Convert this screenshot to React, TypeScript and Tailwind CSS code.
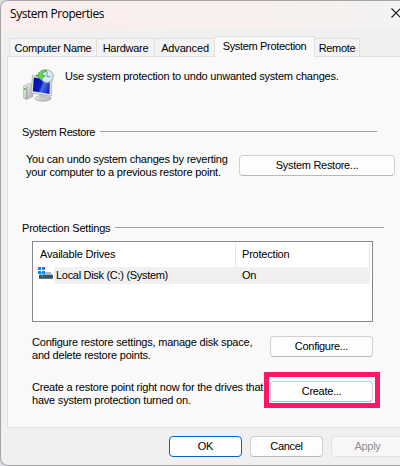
import type { ReactNode } from 'react';
import { clsx } from 'clsx';

const tabs = [
  { label: 'Computer Name', width: 'w-[87px]', tracking: 'tracking-[-0.3px]' },
  { label: 'Hardware', width: 'w-[58px]', tracking: 'tracking-[-0.25px]' },
  { label: 'Advanced', width: 'w-[61px]', tracking: 'tracking-[-0.15px]' },
  { label: 'System Protection', width: 'w-[101px]', tracking: 'tracking-[-0.33px]', active: true },
  { label: 'Remote', width: 'w-[45px]', tracking: 'tracking-[-0.3px]' },
];

const drives = [{ name: 'Local Disk (C:) (System)', protection: 'On' }];

interface ButtonProps {
  children: ReactNode;
  className?: string;
  variant?: 'default' | 'primary' | 'disabled';
}

function Button({ children, className, variant = 'default' }: ButtonProps) {
  return (
    <button
      type="button"
      disabled={variant === 'disabled'}
      className={clsx(
        'flex h-[21px] shrink-0 items-center justify-center rounded-[4px] border whitespace-nowrap tracking-[-0.3px]',
        variant === 'default' && 'border-[#d0d0d0] border-b-[#b9b9b9] bg-[#fdfdfd]',
        variant === 'primary' && 'border-[#0067c0] bg-[#fdfdfd]',
        variant === 'disabled' && 'border-[#e3e3e3] bg-[#f7f7f7] text-[#8f8f8f]',
        className,
      )}
    >
      {children}
    </button>
  );
}

function SectionTitle({ children, className }: { children: ReactNode; className?: string }) {
  return (
    <div className={clsx('flex h-[13px] items-center', className)}>
      <h2 className="shrink-0 whitespace-nowrap">{children}</h2>
      <div className="mb-[2px] h-px flex-1 bg-[#a0a0a0]" />
    </div>
  );
}

function RestoreIcon() {
  return (
    <svg width="32" height="33" viewBox="0 0 32 33" className="shrink-0">
      <defs>
        <linearGradient id="screen" x1="0" y1="0.2" x2="1" y2="0.6">
          <stop offset="0" stopColor="#06109a" />
          <stop offset="0.5" stopColor="#0a1cc0" />
          <stop offset="0.62" stopColor="#4470e4" />
          <stop offset="1" stopColor="#1228c8" />
        </linearGradient>
        <linearGradient id="metal" x1="0" y1="0" x2="1" y2="1">
          <stop offset="0" stopColor="#f2f2f2" />
          <stop offset="1" stopColor="#a8aaac" />
        </linearGradient>
      </defs>
      <path d="M0.5 17 L6 14.5 L10 15.5 V27.5 L3.5 30.5 L0.5 29 Z" fill="url(#metal)" stroke="#a6a6a6" strokeWidth="0.6" />
      <path d="M3.8 17.5 V30" stroke="#8a8a8a" strokeWidth="0.8" />
      <rect x="1" y="19" width="1.8" height="2" fill="#55c83c" />
      <ellipse cx="20" cy="29.3" rx="8.2" ry="2.9" fill="url(#metal)" stroke="#a4a4a4" strokeWidth="0.6" />
      <path d="M17 25 H23 L24 29 H16 Z" fill="#c0c2c4" />
      <path d="M9.5 6.5 L29 9.5 L28.3 27 L8 24 Z" fill="#e2e4e6" stroke="#a0a4a8" strokeWidth="0.7" />
      <path d="M10.8 8.4 L27 11 L26.5 25 L9.8 22.3 Z" fill="url(#screen)" />
      <circle cx="24" cy="7.2" r="6.2" fill="#dcebf5" stroke="#a9bac4" strokeWidth="1.2" />
      <path d="M24 3 V7.6 H27.5" fill="none" stroke="#7793ae" strokeWidth="1" />
      <path d="M23.5 1 C18.5 0.4 15.5 3 15.6 6 H13 L18 11 L22 6.5 H19.3 C19.3 4 21 2.5 23.5 2.5 Z" fill="#6bd354" stroke="#2f9b2b" strokeWidth="0.7" />
    </svg>
  );
}

function DriveIcon() {
  return (
    <svg width="15" height="13" viewBox="0 0 15 13" className="shrink-0">
      <path d="M3 5 H12.5 L14.5 8 H1 Z" fill="#a9b8c4" />
      <rect x="1" y="8" width="14" height="4" fill="#38536a" />
      <rect x="1" y="11" width="14" height="1" fill="#64798a" />
      <rect x="4" y="9" width="1" height="1" fill="#52e070" />
      <g fill="#0c8bdc">
        <rect x="0" y="0" width="3" height="3" />
        <rect x="4" y="0" width="3" height="3" />
        <rect x="0" y="4" width="3" height="3" />
        <rect x="4" y="4" width="3" height="3" />
      </g>
    </svg>
  );
}

export default function App() {
  return (
    <div className="h-[466px] w-[400px] overflow-hidden bg-[#dcdce4] font-['Liberation_Sans',sans-serif] text-[11px] leading-[13px] tracking-[-0.21px] text-black">
      <div className="flex h-[466px] w-[420px] flex-col rounded-l-[8px] border border-r-0 border-[#a5a5a5] bg-[#f0f0f0]">
        <header className="flex h-[28px] w-[399px] shrink-0 items-start justify-between rounded-tl-[7px] bg-linear-to-r from-[#faeeee] via-[#f9efee] to-[#f3f3f1]">
          <h1 className="pt-[5px] pl-[9px] font-['Open_Sans',sans-serif] text-[12px] leading-[16px] tracking-[-0.45px] whitespace-nowrap">
            System Properties
          </h1>
          <svg width="9" height="10" viewBox="0 0 9 10" className="mt-[7px] shrink-0">
            <path d="M0.5 0.5 L9.5 9.5 M9.5 0.5 L0.5 9.5" stroke="#1a1a1a" strokeWidth="1.1" />
          </svg>
        </header>

        <nav className="relative z-10 mt-[7px] flex h-[21px] items-end pl-[8px]">
          {tabs.map((tab) => (
            <div
              key={tab.label}
              className={clsx(
                'flex shrink-0 justify-center border-t border-l border-[#e0e0e0] whitespace-nowrap last:border-r last:border-l-0',
                tab.active
                  ? '-ml-px h-[21px] border-r bg-[#f9f9f9] pt-[3px]'
                  : 'mb-px h-[18px] bg-[#f3f3f3] pt-[3px]',
                tab.width,
                tab.tracking,
              )}
            >
              {tab.label}
            </div>
          ))}
        </nav>

        <main className="-mt-px ml-[6px] h-[372px] shrink-0 border border-[#e2e2e2] bg-[#f9f9f9]">
          <div className="flex pt-[12px] pl-[15px]">
            <RestoreIcon />
            <p className="pt-[1px] pl-[10px] whitespace-nowrap">
              Use system protection to undo unwanted system changes.
            </p>
          </div>

          <SectionTitle className="mt-[24px] ml-[14px] w-[355px] gap-[5px] tracking-[-0.38px]">System Restore</SectionTitle>
          <div className="mt-[14px] flex w-[387px] justify-between pl-[18px]">
            <p className="whitespace-nowrap">
              You can undo system changes by reverting
              <br />
              your computer to a previous restore point.
            </p>
            <Button className="mt-[2px] w-[156px]">System Restore...</Button>
          </div>

          <SectionTitle className="mt-[43px] ml-[14px] w-[362px] gap-[5px]">Protection Settings</SectionTitle>
          <div className="mt-[6px] ml-[24px] h-[81px] w-[341px] border border-[#828790] bg-white p-px">
            <div className="flex h-[24px] w-[336px] items-center">
              <div className="h-full w-[201px] pt-[5px] pl-[6px]">Available Drives</div>
              <div className="h-full flex-1 border-x border-[#e5e5e5] pt-[5px] pl-[6px]">Protection</div>
            </div>
            {drives.map((drive) => (
              <div key={drive.name} className="flex h-[17px] w-[336px] pl-[4px]">
                <DriveIcon />
                <div className="ml-px flex flex-1 bg-[#f0f0f0] pt-[2px] pl-[2px]">
                  <span className="w-[186px] tracking-[-0.3px]">{drive.name}</span>
                  <span>{drive.protection}</span>
                </div>
              </div>
            ))}
          </div>

          <div className="mt-[14px] flex w-[365px] justify-between pl-[24px]">
            <p className="whitespace-nowrap">
              Configure restore settings, manage disk space,
              <br />
              and delete restore points.
            </p>
            <Button className="w-[103px]">Configure...</Button>
          </div>
          <div className="mt-[10px] flex w-[372px] justify-between pl-[24px]">
            <p className="w-[232px] pt-[9px] whitespace-nowrap">
              Create a restore point right now for the drives that
              <br />
              have system protection turned on.
            </p>
            <div className="flex h-[36px] w-[116px] shrink-0 items-start border-5 border-[#ff1668] pt-[4px] pl-px">
              <Button className="w-[103px]">Create...</Button>
            </div>
          </div>
        </main>

        <footer className="flex shrink-0 gap-[8px] pt-[8px] pl-[168px]">
          <Button variant="primary" className="w-[73px]">OK</Button>
          <Button className="w-[73px]">Cancel</Button>
          <Button variant="disabled" className="w-[73px]">Apply</Button>
        </footer>
      </div>
    </div>
  );
}
